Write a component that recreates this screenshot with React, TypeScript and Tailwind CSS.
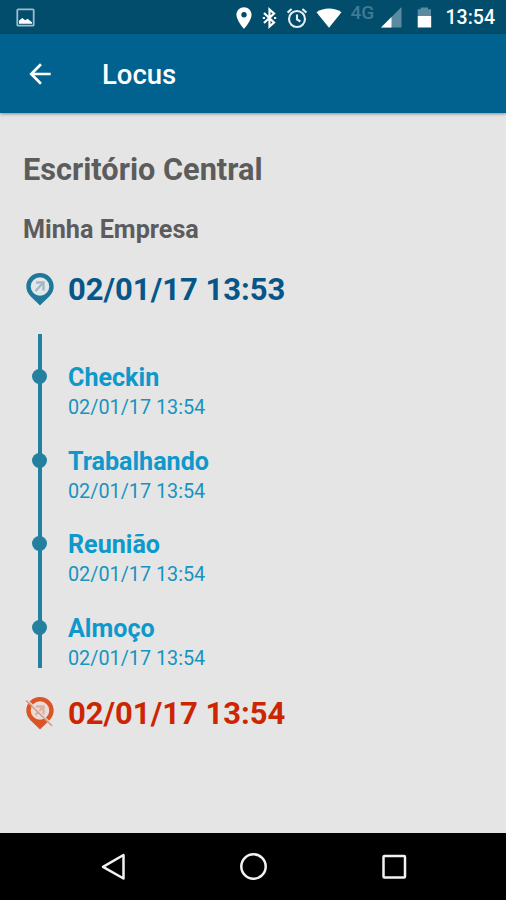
import React from 'react'
import { MdArrowBack, MdPlace } from 'react-icons/md'

const steps = [
  { title: 'Checkin', date: '02/01/17 13:54' },
  { title: 'Trabalhando', date: '02/01/17 13:54' },
  { title: 'Reunião', date: '02/01/17 13:54' },
  { title: 'Almoço', date: '02/01/17 13:54' },
]

const StatusBar = () => (
  <div className="flex h-[34px] items-center bg-[#014d6b] pt-px pr-[11px] pl-4 text-white">
    <svg width="19" height="19" viewBox="0 0 19 19">
      <rect x="1.3" y="1.3" width="16.4" height="16.4" rx="1" fill="none" stroke="#9fbccb" strokeWidth="1.8" />
      <path d="M3 15.8v-3l3.2-2.8 3 2.2 2.4-1.4 4.400 3.500v1.500z" fill="#fff" />
    </svg>
    <div className="ml-auto flex items-center">
      <MdPlace className="mr-[5px] h-[26px] w-[26px]" />
      <svg width="15" height="22" viewBox="0 0 15 22" fill="none" stroke="#fff" strokeWidth="2.2" className="mr-[9px]">
        <path d="M2 6l10 9.5L7.500 19.500V2.500L12 6.500 2 16" />
        <path d="M.8 11h2.200M12 11h2.200" />
      </svg>
      <svg width="22" height="22" viewBox="0 0 22 22" fill="none" stroke="#e6eff3" strokeWidth="2.100">
        <circle cx="11" cy="12" r="8" />
        <path d="M11 7.500v5l3.400 2M1.600 5.600l4-3.600M20.400 5.600l-4-3.600" />
      </svg>
      <svg width="26" height="20" viewBox="0 0 26 20" className="ml-[8px]">
        <path d="M.5 4.200C7.500-.7 18.500-.7 25.500 4.200L13 19.700z" fill="#fff" />
      </svg>
      <span className="-mt-[10px] ml-[9px] w-[26px] text-[19px] leading-none font-medium text-[#407a93]">4G</span>
      <svg width="21" height="21" viewBox="0 0 21 21" className="ml-[4px]">
        <path d="M20.500 0v20.500H0z" fill="#5a8ba0" />
        <path d="M10.500 10v10.500H0z" fill="#fff" />
      </svg>
      <svg width="15" height="21" viewBox="0 0 15 21" className="ml-[15px]">
        <path d="M.7 2.300h3V.5h7.300v1.800h3V9H.7z" fill="#5a8ba0" />
        <path d="M.7 9h13.500v11.500H.7z" fill="#fff" />
      </svg>
      <span className="mt-px ml-[14px] text-[19.500px] leading-none font-medium">13:54</span>
    </div>
  </div>
)

const PinIn = () => (
  <svg width="32" height="34" viewBox="0 0 32 34" className="shrink-0">
    <path d="M16 1C8.300 1 2.300 7 2.300 14.400 2.300 22.500 9.500 26.500 16 33.500 22.500 26.500 29.700 22.500 29.700 14.400 29.700 7 23.700 1 16 1z" fill="#1f7899" />
    <circle cx="16" cy="14.500" r="9.300" fill="#dfe7ea" />
    <path d="M12 10.500h7.500v8M19 11l-7.500 8" fill="none" stroke="#a5b8c0" strokeWidth="2.400" />
  </svg>
)

const PinOut = () => (
  <svg width="32" height="34" viewBox="0 0 32 34" className="shrink-0">
    <path d="M16 1C8.300 1 2.300 7 2.300 14.400 2.300 22.500 9.500 26.500 16 33.500 22.500 26.500 29.700 22.500 29.700 14.400 29.700 7 23.700 1 16 1z" fill="#db5426" />
    <circle cx="16" cy="14.500" r="9.300" fill="#ebdcd5" />
    <path d="M12 10.500h7.500v8M19 11l-7.500 8" fill="none" stroke="#d9b3a6" strokeWidth="2.400" />
    <path d="M3.500 4l25 25" stroke="#e9d5cc" strokeWidth="1.300" />
    <path d="M2 4.500l26 25.500" stroke="#cf9b86" strokeWidth="1.300" />
  </svg>
)

const App = () => {
  return (
    <div className="flex h-[900px] w-[506px] flex-col overflow-hidden bg-[#e5e5e5] font-['Roboto',sans-serif]">
      <StatusBar />
      <header className="z-10 flex h-[79px] items-center bg-[#01628f] pl-[24px] text-white shadow-[0_1px_3px_rgba(0,0,0,0.4)]">
        <MdArrowBack className="h-[32px] w-[32px]" />
        <h1 className="mt-[2px] ml-[46px] text-[27.500px] leading-none font-medium">Locus</h1>
      </header>

      <main className="flex-1 pl-[23px]">
        <h2 className="mt-[39px] text-[30.700px] leading-[36px] font-bold text-[#5c5c5c]">Escritório Central</h2>
        <h3 className="mt-[27px] text-[25.200px] leading-[30px] font-bold text-[#5c5c5c]">Minha Empresa</h3>

        <div className="mt-[27px] ml-px flex h-[34px] items-center gap-3">
          <PinIn />
          <span className="text-[31px] leading-none font-bold text-[#065689]">02/01/17 13:53</span>
        </div>

        <div className="mt-[28px] ml-px flex h-[334px]">
          <div className="flex w-8 justify-center">
            <div className="flex h-[334px] w-[4px] flex-col items-center gap-[68.500px] bg-[#24809f] pt-[35px]">
              {steps.map((step) => (
                <span key={step.title} className="-ml-px h-[15px] w-[15px] shrink-0 rounded-full bg-[#24809f]" />
              ))}
            </div>
          </div>
          <ul className="ml-3 pt-[29px]">
            {steps.map((step) => (
              <li key={step.title} className="h-[83.500px]">
                <p className="text-[25.100px] leading-[30px] font-bold text-[#0e98cb]">{step.title}</p>
                <p className="mt-[3.400px] text-[19.800px] leading-[24px] text-[#1694bf]">{step.date}</p>
              </li>
            ))}
          </ul>
        </div>

        <div className="mt-[28px] ml-px flex h-[34px] items-center gap-3">
          <PinOut />
          <span className="text-[31px] leading-none font-bold text-[#cc2502]">02/01/17 13:54</span>
        </div>
      </main>

      <nav className="h-[67px] bg-black">
        <svg width="506" height="67" viewBox="0 0 506 67" fill="none" stroke="#f2f2f2" strokeWidth="2.500" strokeLinejoin="round">
          <path d="M123.500 22v23.500l-20.500-11.700z" />
          <circle cx="253.500" cy="33.500" r="12.200" />
          <rect x="383.500" y="23" width="21.500" height="21.500" rx="1" />
        </svg>
      </nav>
    </div>
  )
}

export default App
